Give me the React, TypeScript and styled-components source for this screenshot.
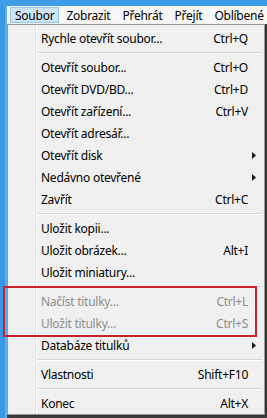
import React from "react";
import styled, { createGlobalStyle } from "styled-components";

const Global = createGlobalStyle`
  html, body { margin: 0; padding: 0; }
  body { background: #4a4a4a; }
`;

const FONT = `"Noto Sans", "DejaVu Sans", sans-serif`;

const Root = styled.div`
  position: relative;
  width: 267px;
  height: 418px;
  overflow: hidden;
  display: flex;
  flex-direction: column;
  background: #474747;
  font-family: ${FONT};
  font-size: 12px;
  letter-spacing: -0.25px;
  color: #000;
`;

const TitleStrip = styled.div`
  height: 6px;
  flex: none;
  background: #3f9ce6;
`;

const Body = styled.div`
  flex: 1;
  display: flex;
  min-height: 0;
`;

const LeftFrame = styled.div`
  width: 7px;
  flex: none;
  background: linear-gradient(to right, #3a97e2 0, #3a97e2 5px, #5fb0ee 5px, #5fb0ee 7px);
`;

const Content = styled.div`
  flex: 1;
  display: flex;
  flex-direction: column;
  min-width: 0;
`;

const MenuBar = styled.div`
  height: 18px;
  flex: none;
  display: flex;
  align-items: flex-start;
  gap: 2px;
  padding: 1px 0 0 3px;
  box-sizing: border-box;
  background: #f7f7f7;
  overflow: hidden;
`;

const BarItem = styled.div<{ $active?: boolean }>`
  height: 16px;
  line-height: 15px;
  padding: 0 4px;
  border: 1px solid ${(p) => (p.$active ? "#99c9ef" : "transparent")};
  background: ${(p) => (p.$active ? "#cde4f7" : "transparent")};
  box-sizing: border-box;
  white-space: nowrap;
  flex: none;
`;

const Below = styled.div`
  flex: 1;
  display: flex;
  align-items: flex-start;
  background: #474747;
`;

const Menu = styled.div`
  width: 258px;
  box-sizing: border-box;
  border: 1px solid #979797;
  padding: 2px 0 0 0;
  display: flex;
  flex-direction: column;
  background:
    linear-gradient(
      to right,
      transparent 27px,
      #e2e3e3 27px,
      #e2e3e3 28px,
      #ffffff 28px,
      #ffffff 29px,
      transparent 29px
    ),
    #f0f0f0;
  box-shadow: 2px 2px 3px rgba(0, 0, 0, 0.35);
`;

const Item = styled.div<{ $disabled?: boolean }>`
  height: 22px;
  display: flex;
  align-items: center;
  padding: 0 16px 0 33px;
  color: ${(p) => (p.$disabled ? "#8d8d8d" : "#000")};
  white-space: nowrap;
`;

const Label = styled.span`
  flex: 1;
`;

const Shortcut = styled.span`
  text-align: right;
`;

const Arrow = styled.svg`
  width: 4px;
  height: 7px;
  margin-right: -8px;
`;

const Separator = styled.div`
  height: 7px;
  flex: none;
  display: flex;
  align-items: center;
  padding: 0 2px 0 29px;

  &::before {
    content: "";
    flex: 1;
    height: 1px;
    border-bottom: 1px solid #ffffff;
    background: #d7d7d7;
  }
`;

const Highlight = styled.div`
  position: absolute;
  left: 3px;
  top: 286px;
  width: 254px;
  height: 51px;
  box-sizing: border-box;
  border: 2px solid #c9222d;
  pointer-events: none;
`;

type Entry =
  | { sep: true }
  | { label: string; shortcut?: string; sub?: boolean; disabled?: boolean };

const entries: Entry[] = [
  { label: "Rychle otevřít soubor...", shortcut: "Ctrl+Q" },
  { sep: true },
  { label: "Otevřít soubor...", shortcut: "Ctrl+O" },
  { label: "Otevřít DVD/BD...", shortcut: "Ctrl+D" },
  { label: "Otevřít zařízení...", shortcut: "Ctrl+V" },
  { label: "Otevřít adresář..." },
  { label: "Otevřít disk", sub: true },
  { label: "Nedávno otevřené", sub: true },
  { label: "Zavřít", shortcut: "Ctrl+C" },
  { sep: true },
  { label: "Uložit kopii..." },
  { label: "Uložit obrázek...", shortcut: "Alt+I" },
  { label: "Uložit miniatury..." },
  { sep: true },
  { label: "Načíst titulky...", shortcut: "Ctrl+L", disabled: true },
  { label: "Uložit titulky...", shortcut: "Ctrl+S", disabled: true },
  { label: "Databáze titulků", sub: true },
  { sep: true },
  { label: "Vlastnosti", shortcut: "Shift+F10" },
  { sep: true },
  { label: "Konec", shortcut: "Alt+X" },
];

const barItems = ["Soubor", "Zobrazit", "Přehrát", "Přejít", "Oblíbené"];

export default function App() {
  return (
    <>
      <Global />
      <Root>
        <TitleStrip />
        <Body>
          <LeftFrame />
          <Content>
            <MenuBar>
              {barItems.map((b, i) => (
                <BarItem key={b} $active={i === 0}>
                  {b}
                </BarItem>
              ))}
            </MenuBar>
            <Below>
              <Menu>
                {entries.map((e, i) =>
                  "sep" in e ? (
                    <Separator key={i} />
                  ) : (
                    <Item key={i} $disabled={e.disabled}>
                      <Label>{e.label}</Label>
                      {e.shortcut && <Shortcut>{e.shortcut}</Shortcut>}
                      {e.sub && (
                        <Arrow viewBox="0 0 4 7">
                          <path d="M0 0 L4 3.5 L0 7 Z" fill="#1a1a1a" />
                        </Arrow>
                      )}
                    </Item>
                  )
                )}
              </Menu>
            </Below>
          </Content>
        </Body>
        <Highlight />
      </Root>
    </>
  );
}
